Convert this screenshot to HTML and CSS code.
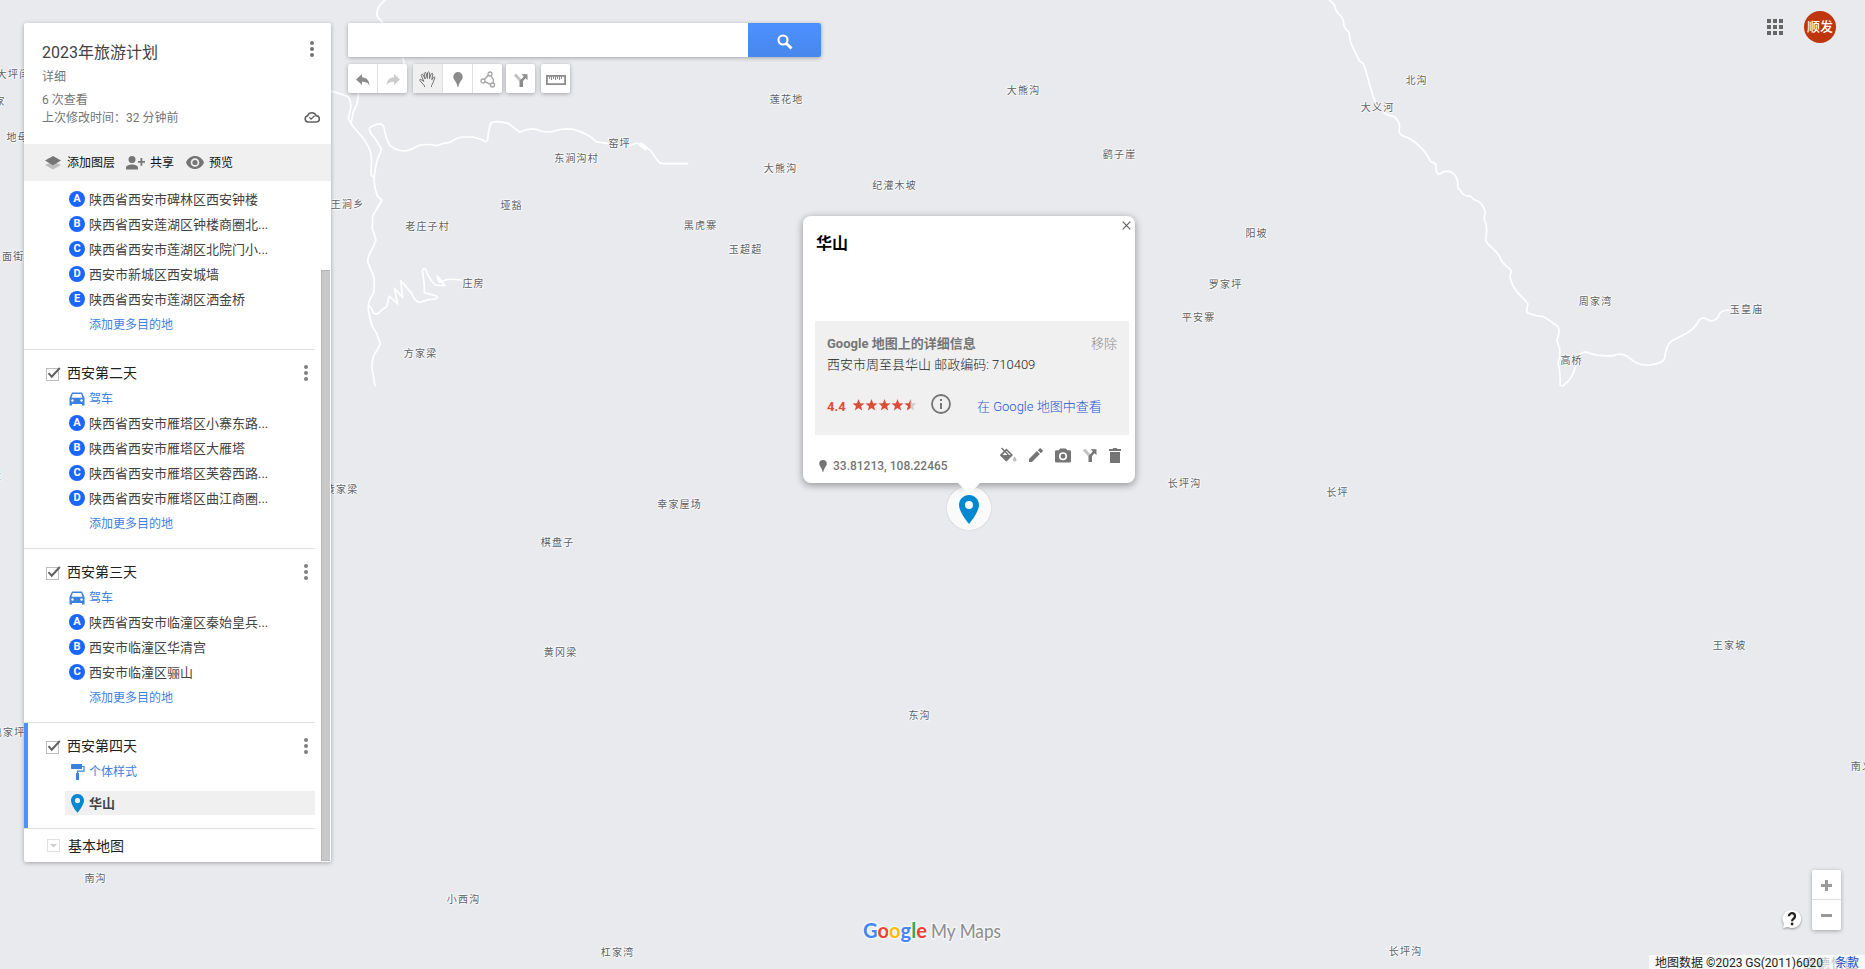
FILE: index.html
```html
<!DOCTYPE html>
<html lang="zh-CN">
<head>
<meta charset="utf-8">
<title>2023年旅游计划 - Google My Maps</title>
<link rel="stylesheet" href="styles.css">
</head>
<body>
<svg class="defs" width="0" height="0">
  <defs>
    <symbol id="kebab" viewBox="0 0 6 16"><circle cx="3" cy="2" r="2"/><circle cx="3" cy="8" r="2"/><circle cx="3" cy="14" r="2"/></symbol>
    <symbol id="check" viewBox="0 0 16 16"><rect x="1.500" y="3.500" width="12" height="12" fill="#fff" stroke="#bdbdbd"/><path d="M3.500 8.200l3.200 3.500L14.800 3" fill="none" stroke="#616161" stroke-width="2"/></symbol>
    <symbol id="car" viewBox="0 0 16 14"><path d="M3 0.500h10L15.500 6v7.500h-2.500V12h-10v1.500H.5V6z"/><path d="M3.700 2h8.600l1.200 3.800h-11z" fill="#fff"/><circle cx="3.500" cy="8.500" r="1.200" fill="#fff"/><circle cx="12.500" cy="8.500" r="1.200" fill="#fff"/></symbol>
    <symbol id="pin" viewBox="0 0 20 29"><path fill-rule="evenodd" d="M10 0C4.400 0 0 4.400 0 10c0 7.200 10 19 10 19s10-11.800 10-19C20 4.400 15.600 0 10 0zm0 6a4 4 0 1 1 0 8 4 4 0 0 1 0-8z"/></symbol>
    <symbol id="drop" viewBox="0 0 10 15"><path d="M5 0a4.700 4.700 0 0 0-4.700 4.700C.3 8 3.800 9.500 4.600 15h.8c.8-5.500 4.300-7 4.300-10.300A4.700 4.700 0 0 0 5 0z"/></symbol>
    <symbol id="fork" viewBox="0 0 14 14"><path d="M1 1.500l6 6.500" stroke="#c4c4c4" stroke-width="3" fill="none"/><path d="M5.500 14V9q0-1 .8-1.800L9.800 3.500 7.500 1.200H13.500v6l-2-2L9 8v6z"/></symbol>
    <symbol id="star" viewBox="0 0 13 12"><path d="M6.500 0l1.600 4.200 4.400.2-3.500 2.800 1.200 4.400-3.700-2.500-3.700 2.500L4 7.200.5 4.400l4.400-.2z"/></symbol>
  </defs>
</svg>

<main class="map">
  <svg class="roads" width="1865" height="969">
    <g transform="scale(.33333)" fill="none" stroke="#fff" stroke-width="5" stroke-linejoin="round" stroke-linecap="round">
      <g transform="translate(1020 0)">
        <path d="M135 0L118 18Q108 35 112 50L130 70L165 120L188 170L194 195L100 240L55 280Q55 310 40 335L33 370"/>
        <path d="M-40 270L0 281L25 290Q33 305 33 320L25 355L38 378L70 415L85 440Q95 460 95 480L93 525L102 532"/>
        <path d="M805 431L768 425Q745 400 700 388Q670 383 640 394Q610 400 590 388Q565 383 540 397L505 370Q465 360 453 369Q447 380 443 418Q438 430 428 420L400 411H375Q355 410 330 427Q310 428 290 437Q260 430 235 437Q210 452 190 453Q170 452 150 437Q135 410 133 385Q130 368 110 373Q88 380 88 387Q90 400 105 415L123 445Q125 455 115 470Q105 500 102 540L105 565L113 590L126 600L98 648L97 685L108 720L98 745Q84 765 83 785Q90 805 98 820Q104 840 103 860Q102 882 94 890Q84 905 85 930Q92 965 97 980L110 1000L121 1033L100 1070Q94 1090 97 1110L105 1157"/>
        <path d="M85 918Q95 920 98 935Q108 952 125 930L140 920L148 888L173 912L163 865L188 892L182 842L215 880Q225 907 240 907L265 899Q300 898 290 888L253 878Q255 860 247 812Q253 800 259 812Q263 830 285 855L315 857L292 828Q295 855 310 842Q330 834 365 841"/>
        <path d="M868 437L890 429L915 440L930 450L952 480Q958 491 968 491H1043"/><path d="M903 434l14 10" stroke-width="13"/>
      </g>
      <g transform="translate(3900 0)">
        <path d="M88 0L103 14Q107 35 118 43Q132 55 132 78Q136 88 147 96Q150 120 153 130L178 182Q192 190 194 200L215 275Q220 295 226 305M252 338Q262 346 283 350Q297 362 299 380Q292 405 315 410Q335 415 365 445Q380 460 392 485Q405 488 408 495Q406 520 418 523Q440 505 460 520Q475 535 473 555Q472 565 480 570Q490 590 510 588Q520 600 535 604Q552 615 556 640Q550 655 555 662Q564 680 557 720Q560 730 575 742Q600 765 603 780Q612 795 631 808Q636 815 630 825Q630 850 655 880Q680 905 684 912Q675 940 687 940Q700 947 730 950Q745 957 775 981Q780 1000 771 1020Q772 1030 779 1045V1075Q771 1085 777 1100Q782 1130 780 1155Q787 1163 797 1150Q815 1140 827 1098M840 1062Q855 1052 870 1060Q895 1070 940 1067Q965 1055 990 1075Q1015 1098 1050 1095Q1090 1090 1094 1075Q1098 1035 1115 1023L1160 1000Q1185 985 1198 960Q1208 948 1220 958Q1240 970 1255 950Q1258 930 1290 930"/>
      </g>
    </g>
  </svg>

  <div class="labels">
    <span style="left:13px;top:74px">大坪闫</span><span style="left:-6px;top:101px">张家</span><span style="left:17px;top:137px">地母</span><span style="left:7px;top:256px">上面街</span><span style="left:-4px;top:475px">崖</span><span style="left:8px;top:732px">电家坪</span><span style="left:341px;top:489px">黄家梁</span><span style="left:347px;top:204px">王涧乡</span><span style="left:95px;top:878px">南沟</span>
    <span style="left:786px;top:99px">莲花地</span><span style="left:780px;top:168px">大熊沟</span><span style="left:700px;top:225px">黑虎寨</span><span style="left:576px;top:158px">东涧沟村</span><span style="left:619px;top:143px">窑坪</span><span style="left:511px;top:205px">垭豁</span><span style="left:427px;top:226px">老庄子村</span><span style="left:473px;top:283px">庄房</span><span style="left:420px;top:353px">方家梁</span>
    <span style="left:1023px;top:90px">大熊沟</span><span style="left:1119px;top:154px">鹞子崖</span><span style="left:894px;top:185px">纪灌木坡</span><span style="left:745px;top:249px">玉超超</span><span style="left:1256px;top:233px">阳坡</span><span style="left:1225px;top:284px">罗家坪</span><span style="left:1198px;top:317px">平安寨</span><span style="left:1184px;top:483px">长坪沟</span><span style="left:1337px;top:492px">长坪</span>
    <span style="left:679px;top:504px">幸家屋场</span><span style="left:557px;top:542px">棋盘子</span><span style="left:560px;top:652px">黄冈梁</span><span style="left:919px;top:715px">东沟</span><span style="left:1729px;top:645px">王家坡</span><span style="left:1867px;top:766px">南义沟</span><span style="left:463px;top:899px">小西沟</span><span style="left:617px;top:952px">杠家湾</span><span style="left:1405px;top:951px">长坪沟</span>
    <span style="left:1416px;top:80px">北沟</span><span style="left:1377px;top:107px">大义河</span><span style="left:1595px;top:301px">周家湾</span><span style="left:1746px;top:309px">玉皇庙</span><span style="left:1571px;top:360px">高桥</span>
  </div>

  <div class="marker"><svg width="20" height="29" fill="#0288d1"><use href="#pin"/></svg></div>

  <section class="popup">
    <svg class="close" width="9" height="9" viewBox="0 0 9 9"><path d="M.7.7l7.600 7.600M8.300.7L.7 8.300" stroke="#616161" stroke-width="1.200"/></svg>
    <h2>华山</h2>
    <div class="details">
      <div class="details-head"><b>Google 地图上的详细信息</b><span>移除</span></div>
      <p>西安市周至县华山 邮政编码: 710409</p>
      <div class="rating">
        <b>4.4</b>
        <svg class="stars" width="65" height="12" fill="#dd4b39"><use href="#star" width="13" height="12"/><use href="#star" x="13" width="13" height="12"/><use href="#star" x="26" width="13" height="12"/><use href="#star" x="39" width="13" height="12"/><use href="#star" x="52" width="13" height="12" fill="#ccc"/><path d="M58.500 0v9.100l-3.700 2.500L56 7.200l-3.500-2.800 4.400-.2z"/></svg>
        <svg class="info" width="20" height="20" viewBox="0 0 20 20"><circle cx="10" cy="10" r="9" fill="none" stroke="#757575" stroke-width="1.800"/><path d="M9 9h2v6H9zM9 5h2v2H9z" fill="#757575"/></svg>
        <a>在 Google 地图中查看</a>
      </div>
    </div>
    <footer>
      <div class="coords"><svg width="8" height="12" fill="#757575"><use href="#drop"/></svg><span>33.81213, 108.22465</span></div>
      <div class="actions">
        <svg width="17" height="16" viewBox="0 0 17 16"><path d="M1.500 1l7 7" stroke="#757575" stroke-width="1.500"/><path fill-rule="evenodd" d="M6.500 1.500l6.500 6.500-6 6q-.7.600-1.400 0L.3 8.700q-.5-.6 0-1.200zM6.500 3.700L2.500 8h8.200z"/><path d="M14.700 9.500s-1.800 2-1.800 3.200a1.700 1.700 0 0 0 3.600 0c0-1.200-1.800-3.200-1.800-3.200z" fill="#bdbdbd"/></svg>
        <svg width="14" height="14" viewBox="0 0 14 14"><path d="M0 11l7.900-7.900 3 3L3 14H0zM8.800 2.200L10.600.4q.6-.6 1.200 0l1.800 1.800q.6.600 0 1.200l-1.800 1.800z"/></svg>
        <svg width="16" height="15" viewBox="0 0 17 15"><path fill-rule="evenodd" d="M5.500 0h6L13 2h2.500Q17 2 17 3.500v10q0 1.500-1.500 1.500h-14Q0 15 0 13.500v-10Q0 2 1.500 2H4zm3 4a4.300 4.300 0 1 0 0 8.600 4.300 4.300 0 0 0 0-8.600zm0 1.700a2.600 2.600 0 1 1 0 5.200 2.600 2.600 0 0 1 0-5.200z"/></svg>
        <svg width="14" height="14"><use href="#fork"/></svg>
        <svg width="12" height="15" viewBox="0 0 12 15"><path d="M0 1h3.500l1-1h3l1 1H12v2H0zM1 4h10v11H1z"/></svg>
      </div>
    </footer>
  </section>

  <aside class="panel">
    <header>
      <div class="line title"><h1>2023年旅游计划</h1><svg width="6" height="16"><use href="#kebab"/></svg></div>
      <div class="line desc">详细</div>
      <div class="line">6 次查看</div>
      <div class="line saved"><span>上次修改时间：32 分钟前</span><svg width="16" height="12" viewBox="0 0 16 12"><path d="M4 11a3.200 3.200 0 0 1-.3-6.300 4.500 4.500 0 0 1 8.500.2A3 3 0 0 1 12.500 11z" fill="none" stroke="#616161" stroke-width="1.600"/><path d="M5.300 6.300l1.800 1.800 3.400-3.400" fill="none" stroke="#616161" stroke-width="1.300"/></svg></div>
    </header>
    <nav>
      <svg class="i-layers" width="16" height="14" viewBox="0 0 16 14"><path d="M0 9l8-3.500L16 9l-8 4.500z" fill="#bdbdbd"/><path d="M8 0l8 4.500L8 9.200 0 4.500z"/></svg><span>添加图层</span>
      <svg class="i-share" width="19" height="14" viewBox="0 0 19 14"><circle cx="6" cy="3.500" r="3.500"/><path d="M0 13.500v-2C0 9.500 3.700 8.500 6 8.500s6 1 6 3v2zM14.500 2h1.800v3H19v1.800h-2.700v3h-1.800v-3H12V5h2.500z"/></svg><span>共享</span>
      <svg class="i-eye" width="18" height="13" viewBox="0 0 18 13"><path fill-rule="evenodd" d="M9 0c4 0 7.500 2.600 9 6.500-1.500 3.900-5 6.500-9 6.500S1.500 10.400 0 6.500C1.500 2.600 5 0 9 0zm0 2.200a4.300 4.300 0 1 0 0 8.600 4.300 4.300 0 0 0 0-8.600z"/><circle cx="9" cy="6.500" r="2.600"/></svg><span>预览</span>
    </nav>
    <div class="list">
      <div class="layers">
        <section class="layer first">
          <div class="row"><i>A</i>陕西省西安市碑林区西安钟楼</div>
          <div class="row"><i>B</i>陕西省西安莲湖区钟楼商圈北...</div>
          <div class="row"><i>C</i>陕西省西安市莲湖区北院门小...</div>
          <div class="row"><i>D</i>西安市新城区西安城墙</div>
          <div class="row"><i>E</i>陕西省西安市莲湖区洒金桥</div>
          <div class="row link more">添加更多目的地</div>
        </section>
        <section class="layer">
          <div class="row head"><svg width="16" height="16"><use href="#check"/></svg><h3>西安第二天</h3><svg class="menu" width="6" height="16"><use href="#kebab"/></svg></div>
          <div class="row link"><svg width="16" height="14"><use href="#car"/></svg>驾车</div>
          <div class="row"><i>A</i>陕西省西安市雁塔区小寨东路...</div>
          <div class="row"><i>B</i>陕西省西安市雁塔区大雁塔</div>
          <div class="row"><i>C</i>陕西省西安市雁塔区芙蓉西路...</div>
          <div class="row"><i>D</i>陕西省西安市雁塔区曲江商圈...</div>
          <div class="row link more">添加更多目的地</div>
        </section>
        <section class="layer">
          <div class="row head"><svg width="16" height="16"><use href="#check"/></svg><h3>西安第三天</h3><svg class="menu" width="6" height="16"><use href="#kebab"/></svg></div>
          <div class="row link"><svg width="16" height="14"><use href="#car"/></svg>驾车</div>
          <div class="row"><i>A</i>陕西省西安市临潼区秦始皇兵...</div>
          <div class="row"><i>B</i>西安市临潼区华清宫</div>
          <div class="row"><i>C</i>西安市临潼区骊山</div>
          <div class="row link more">添加更多目的地</div>
        </section>
        <section class="layer active">
          <div class="row head"><svg width="16" height="16"><use href="#check"/></svg><h3>西安第四天</h3><svg class="menu" width="6" height="16"><use href="#kebab"/></svg></div>
          <div class="row link"><svg width="16" height="16" viewBox="0 0 16 16"><path d="M3 0h10v5H3q-1 0-1-1V1q0-1 1-1zM7 9h3v7H7z"/><path d="M13 2.500h2v4.700H8.500V10" fill="none" stroke="#3b82e0" stroke-width="1.200"/></svg>个体样式</div>
          <div class="feature"><svg width="13" height="19" fill="#0288d1"><use href="#pin"/></svg><b>华山</b></div>
        </section>
        <section class="layer base"><svg width="13" height="13" viewBox="0 0 13 13"><rect x=".5" y=".5" width="12" height="12" fill="#fff" stroke="#e0e0e0"/><path d="M3 5h7L6.500 8.500z" fill="#ccc"/></svg><h3>基本地图</h3></section>
      </div>
      <div class="scrollbar"></div>
    </div>
  </aside>

  <div class="top">
    <div class="search"><div class="field"></div><div class="go"><svg width="16" height="16" viewBox="0 0 16 16"><circle cx="6" cy="6" r="4.500" fill="none" stroke="#fff" stroke-width="2.200"/><path d="M9.500 9.500l5 5" stroke="#fff" stroke-width="2.800"/></svg></div></div>
    <div class="tools">
      <div class="group"><div><svg width="14" height="12" viewBox="0 0 14 12" fill="#8c8c8c"><path d="M6 0v3.200c4.500.3 7 3 7.500 8C11.500 8.500 9.500 7.800 6 7.800V11L0 5.500z"/></svg></div><div><svg width="14" height="12" viewBox="0 0 14 12" fill="#ccc"><path d="M8 0v3.200c-4.500.3-7 3-7.500 8C2.500 8.500 4.500 7.800 8 7.800V11l6-5.500z"/></svg></div></div>
      <div class="group g2"><div class="on"><svg width="17" height="17" viewBox="0 0 17 17"><path d="M5.500 16v-1.200L1 9.800q-.8-1.500.8-1.500L4.800 10.500 2.300 4.400q.1-1.500 1.500-1L6.200 8 5.300 2.300q.6-1.500 1.800-.3L8.300 7.500 8.600 1.500q.9-1.200 1.800 0L10.500 7.600 12.300 2.700q1.200-1 1.600.3L12.800 8.800 14.600 6.200q1.400-.6 1.300.7L14 11.500q-.5 1.800-1.500 3V16" fill="none" stroke="#666" stroke-width=".9"/></svg></div><div><svg width="10" height="15" fill="#8c8c8c"><use href="#drop"/></svg></div><div><svg width="16" height="17" viewBox="0 0 16 17" fill="none" stroke="#a3a3a3" stroke-width="1.300"><circle cx="10" cy="3" r="2"/><circle cx="3" cy="10" r="2"/><circle cx="12.500" cy="14" r="2"/><path d="M8.300 4.200L4.500 8.500M5 10.800l5.500 2.500M11 5l2.500 4-.5 3"/></svg></div></div>
      <div class="group g3"><div><svg width="14" height="14" fill="#8c8c8c"><use href="#fork"/></svg></div></div>
      <div class="group g4"><div><svg width="20" height="10" viewBox="0 0 20 10"><path d="M.9.9h18.200v8.200H.9z" fill="none" stroke="#8c8c8c" stroke-width="1.800"/><path d="M3.500 1v3M5.500 1v4M7.500 1v3M9.500 1v4M11.500 1v3M13.500 1v4M15.500 1v3" stroke="#8c8c8c"/></svg></div></div>
    </div>
  </div>

  <div class="account">
    <svg width="16" height="16" viewBox="0 0 16 16" fill="#666"><path d="M0 0h4v4H0zM6 0h4v4H6zM12 0h4v4h-4zM0 6h4v4H0zM6 6h4v4H6zM12 6h4v4h-4zM0 12h4v4H0zM6 12h4v4H6zM12 12h4v4h-4z"/></svg>
    <div class="avatar">顺发</div>
  </div>

  <svg class="logo" width="150" height="32" viewBox="0 0 150 32">
    <text x="4" y="21" class="brand" textLength="64" lengthAdjust="spacingAndGlyphs"><tspan fill="#4285f4">G</tspan><tspan fill="#ea4335">o</tspan><tspan fill="#fbbc05">o</tspan><tspan fill="#4285f4">g</tspan><tspan fill="#34a853">l</tspan><tspan fill="#ea4335">e</tspan></text>
    <text x="72" y="21" class="product" textLength="70" lengthAdjust="spacingAndGlyphs">My Maps</text>
  </svg>

  <div class="corner">
    <svg class="help" width="22" height="22" viewBox="0 0 22 22"><path d="M11 2a9 9 0 1 1-4 17L2 20l1-4A9 9 0 0 1 11 2z" fill="#fff"/><path d="M8 8.200a3 3 0 1 1 4.800 2.300c-1.200.8-1.700 1.200-1.700 2.700" fill="none" stroke="#212121" stroke-width="2.300"/><circle cx="11.100" cy="16" r="1.400" fill="#212121"/></svg>
    <div class="zoom"><div><svg width="11" height="11" viewBox="0 0 11 11"><path d="M4 0h3v4h4v3H7v4H4V7H0V4h4z"/></svg></div><div><svg width="11" height="3" viewBox="0 0 11 3"><path d="M0 0h11v3H0z"/></svg></div></div>
  </div>
  <div class="copyright"><em>高德快图</em><span>地图数据 ©2023 GS(2011)6020</span><a>条款</a></div>
</main>
</body>
</html>
```
FILE: styles.css
```css
* { box-sizing: border-box; }
body {
  margin: 0;
  font: 13px/1 Roboto, "Noto Sans CJK SC", sans-serif;
  color: #424242;
}
h1, h2, h3, p { margin: 0; font-weight: 400; }
svg { display: block; flex: none; }
.defs { position: absolute; }
.map {
  position: relative;
  width: 1865px;
  height: 969px;
  overflow: hidden;
  background: #e8eaed;
}
.roads { position: absolute; left: 0; top: 0; }
.labels span {
  position: absolute;
  transform: translate(-50%, -50%);
  white-space: nowrap;
  font-size: 10px;
  line-height: 14px;
  letter-spacing: 1.2px;
  margin: 1px 0 0 .6px;
  color: #5f6266;
  text-shadow: 1px 0 #f8f9fa, -1px 0 #f8f9fa, 0 1px #f8f9fa, 0 -1px #f8f9fa, 1px 1px 1px #f8f9fa, -1px -1px 1px #f8f9fa;
}

/* side panel */
.panel {
  position: absolute;
  left: 24px;
  top: 23px;
  width: 307px;
  height: 839px;
  display: flex;
  flex-direction: column;
  background: #fff;
  border-radius: 2px;
  overflow: hidden;
  box-shadow: 0 1px 4px rgba(0, 0, 0, .3);
}
.panel header {
  height: 121px;
  padding: 18px 11px 0 18px;
  font-size: 12px;
  line-height: 18px;
  color: #757575;
}
.panel .line { display: flex; justify-content: space-between; }
.panel .title { height: 22px; padding-right: 5px; }
.title h1 { font-size: 16px; line-height: 24px; color: #424242; }
.title svg { fill: #757575; }
.panel .desc { margin: 5px 0; }
.saved svg { margin-top: 2px; }
.panel nav {
  height: 37px;
  display: flex;
  align-items: center;
  padding-left: 21px;
  background: #f0f0f0;
  font-size: 12px;
  color: #111;
}
nav svg { fill: #757575; }
.i-layers { margin-right: 6px; }
.i-share { margin: 0 5px 0 11px; }
.i-eye { margin: 0 5px 0 12px; }
.list { flex: 1; display: flex; justify-content: space-between; }
.layers { width: 291px; }
.layer { border-top: 1px solid #e0e0e0; padding: 11px 0 12px 45px; }
.layer.first { border: 0; padding-top: 6px; }
.row {
  height: 25px;
  display: flex;
  align-items: center;
  gap: 4px;
  padding-bottom: 1px;
  white-space: nowrap;
}
.row i {
  width: 16px;
  height: 16px;
  border-radius: 50%;
  background: #1a66ff;
  color: #fff;
  font: 700 11px/16px Roboto, sans-serif;
  text-align: center;
}
.row.link { font-size: 12px; color: #3b82e0; padding-bottom: 0; }
.row.link svg { fill: #3b82e0; }
.row.more { padding: 1px 0 0 20px; }
.row.head { margin-left: -24px; padding-bottom: 2px; gap: 6px; }
.row h3, .base h3 { font-size: 14px; color: #212121; }
.row h3 { padding-top: 1px; }
.row .menu { margin-left: auto; margin-right: 6px; fill: #808080; }
.layer.active { padding-bottom: 13px; position: relative; }
.layer.active::before {
  content: "";
  position: absolute;
  left: 0;
  top: 0;
  bottom: 0;
  width: 4px;
  background: #4d90fe;
}
.feature {
  display: flex;
  align-items: center;
  gap: 5px;
  height: 24px;
  margin: 7px 0 0 -4px;
  padding-left: 6px;
  background: #f0f0f0;
}
.feature b { font-weight: 700; }
.layer.base { display: flex; align-items: center; gap: 8px; height: 34px; padding: 0 0 0 23px; }
.scrollbar {
  width: 9px;
  height: 591px;
  margin: 89px 1px 0 0;
  background: #c9c9c9;
  border: 1px solid #b5b5b5;
  border-right: 0;
}

/* search and tools */
.top { position: absolute; left: 348px; top: 23px; }
.search { display: flex; width: 473px; height: 34px; border-radius: 2px; overflow: hidden; }
.search, .group, .zoom { box-shadow: 0 1px 4px rgba(0, 0, 0, .3); }
.field { width: 400px; background: #fff; }
.go {
  flex: 1;
  display: flex;
  align-items: center;
  justify-content: center;
  padding-top: 3px;
  background: linear-gradient(#4d90fe, #4787ed);
}
.tools { display: flex; margin-top: 7px; }
.group { display: flex; height: 29px; background: #fff; border-radius: 2px; }
.group div { width: 29px; display: flex; align-items: center; justify-content: center; padding-top: 2px; }
.group div + div { width: 30px; border-left: 1px solid #e0e0e0; }
.group .on { background: #f0f0f0; }
.g2 { margin-left: 6px; }
.g3 { margin-left: 4px; }
.g4 { margin-left: 6px; }
.group.g4 div { width: 29px; }

/* info window */
.marker {
  position: absolute;
  left: 947px;
  top: 486px;
  width: 44px;
  height: 44px;
  display: flex;
  justify-content: center;
  padding-top: 8px;
  border: 1px solid #fff;
  border-radius: 50%;
  background: #fafafa;
  box-shadow: 0 0 2px rgba(0, 0, 0, .15);
}
.popup {
  position: absolute;
  left: 803px;
  top: 216px;
  width: 332px;
  height: 267px;
  padding: 0 6px 0 12px;
  background: #fff;
  border-radius: 8px;
  box-shadow: 0 2px 7px 1px rgba(0, 0, 0, .32);
}
.popup::after {
  content: "";
  position: absolute;
  left: 155px;
  top: 267px;
  border: solid transparent;
  border-width: 11px 11.500px 0;
  border-top-color: #fff;
}
.close { position: absolute; right: 4px; top: 5px; }
.popup h2 {
  height: 105px;
  padding: 18px 0 0 1px;
  font-size: 16px;
  line-height: 20px;
  font-weight: 700;
  color: #000;
}
.details { height: 114px; background: #f0f0f0; padding: 12px 12px 0; line-height: 21px; }
.details-head { display: flex; justify-content: space-between; color: #8c8c8c; font-weight: 300; }
.details-head b { color: #757575; font-weight: 700; }
.details p { color: #222; font-weight: 300; }
.rating { display: flex; align-items: center; height: 20px; margin-top: 19px; color: #dd4b39; }
.rating b, .rating a { padding-top: 5px; }
.rating b { width: 25px; }
.stars { margin-top: 1px; }
.info { margin: 0 26px 0 14px; }
.rating a { color: #1a56d6; font-weight: 300; white-space: nowrap; }
.popup footer { display: flex; justify-content: space-between; padding: 12px 8px 0 4px; }
.coords { display: flex; align-items: center; gap: 6px; height: 14px; margin-top: 12px; font-size: 12px; font-weight: 500; color: #757575; }
.actions { display: flex; align-items: center; gap: 12px; height: 16px; fill: #757575; }

/* corners */
.account { position: absolute; right: 29px; top: 11px; display: flex; align-items: center; gap: 21px; }
.avatar {
  width: 32px;
  height: 32px;
  border-radius: 50%;
  background: #bf360c;
  color: #fff;
  font-weight: 500;
  line-height: 32px;
  text-align: center;
}
.logo { position: absolute; left: 859px; top: 917px; }
.logo text { font-family: Lato, sans-serif; paint-order: stroke; stroke: #f4f5f7; stroke-width: 3px; }
.brand { font-size: 20px; font-weight: 700; }
.product { font-size: 19px; fill: #8c8c8c; }
.corner { position: absolute; right: 24px; top: 870px; display: flex; gap: 9px; }
.help { margin-top: 38px; filter: drop-shadow(0 1px 1px rgba(0, 0, 0, .4)); }
.zoom { width: 29px; background: #fff; border-radius: 2px; fill: #999; }
.zoom div { height: 29px; display: flex; align-items: center; justify-content: center; padding-top: 2px; }
.zoom div + div { height: 30px; border-top: 1px solid #e0e0e0; }
.copyright {
  position: absolute;
  right: 0;
  bottom: 0;
  width: 216px;
  height: 14px;
  display: flex;
  justify-content: space-between;
  padding: 0 6px;
  background: #f8f9f9;
  font-size: 12px;
  line-height: 16px;
  color: #222;
  white-space: nowrap;
}
.copyright span, .copyright a { position: relative; }
.copyright a { color: #15c; }
.copyright em {
  position: absolute;
  right: 6px;
  top: 1px;
  font-style: normal;
  font-size: 13px;
  letter-spacing: 1px;
  color: #c4c6c8;
}
```
